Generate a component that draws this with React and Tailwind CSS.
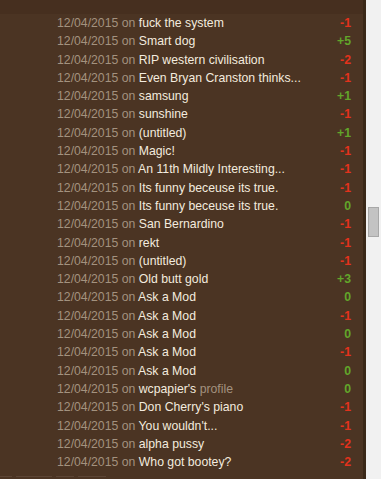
import React from "react";

const rows = [
  { title: "fuck the system", score: -1 },
  { title: "Smart dog", score: 5 },
  { title: "RIP western civilisation", score: -2 },
  { title: "Even Bryan Cranston thinks...", score: -1 },
  { title: "samsung", score: 1 },
  { title: "sunshine", score: -1 },
  { title: "(untitled)", score: 1 },
  { title: "Magic!", score: -1 },
  { title: "An 11th Mildly Interesting...", score: -1 },
  { title: "Its funny beceuse its true.", score: -1 },
  { title: "Its funny beceuse its true.", score: 0 },
  { title: "San Bernardino", score: -1 },
  { title: "rekt", score: -1 },
  { title: "(untitled)", score: -1 },
  { title: "Old butt gold", score: 3 },
  { title: "Ask a Mod", score: 0 },
  { title: "Ask a Mod", score: -1 },
  { title: "Ask a Mod", score: 0 },
  { title: "Ask a Mod", score: -1 },
  { title: "Ask a Mod", score: 0 },
  { title: "wcpapier's", extra: "profile", score: 0 },
  { title: "Don Cherry's piano", score: -1 },
  { title: "You wouldn't...", score: -1 },
  { title: "alpha pussy", score: -2 },
  { title: "Who got bootey?", score: -2 },
];

const Score = ({ value }) => {
  const label = value > 0 ? `+${value}` : `${value}`;
  return (
    <span
      className={`font-bold ${value < 0 ? "text-[#e2321c]" : "text-[#62a52a]"}`}
    >
      {label}
    </span>
  );
};

const App = () => {
  return (
    <div className="flex h-[479px] w-[381px] overflow-hidden bg-[#f1f1f1] font-['Liberation_Sans',Arial,sans-serif]">
      {/* Main panel */}
      <div className="flex w-[363px] flex-col bg-[#4b3423]">
        <div className="h-[14px] bg-[#462f1f]" />
        <ul className="pl-[57px] pr-[12px] text-[12.25px]">
          {rows.map((row, idx) => (
            <li key={idx} className="flex h-[18.3px] items-center justify-between leading-[18.3px]">
              <span className="whitespace-nowrap">
                <span className="text-[#a3927f]">12/04/2015 on </span>
                <span className="text-[#f3ebdf]">{row.title}</span>
                {row.extra && <span className="text-[#a3927f]"> {row.extra}</span>}
              </span>
              <Score value={row.score} />
            </li>
          ))}
        </ul>
        <div className="mt-auto flex gap-[4px]">
          <div className="h-[3px] w-[12px] border-t border-[#5c4535]" />
          <div className="h-[3px] w-[36px] border-t border-[#5c4535]" />
          <div className="h-[3px] w-[18px] border-t border-[#5c4535]" />
          <div className="h-[3px] w-[28px] border-t border-[#5c4535]" />
        </div>
      </div>
      <div className="w-[3px] bg-[#3a2818]" />
      {/* Scrollbar */}
      <div className="flex flex-1 flex-col bg-[#f1f1f1]">
        <div className="mx-auto mt-[207px] h-[30px] w-[11px] border border-[#a8a8a8] bg-[#c3c3c3]" />
      </div>
    </div>
  );
};

export default App;
